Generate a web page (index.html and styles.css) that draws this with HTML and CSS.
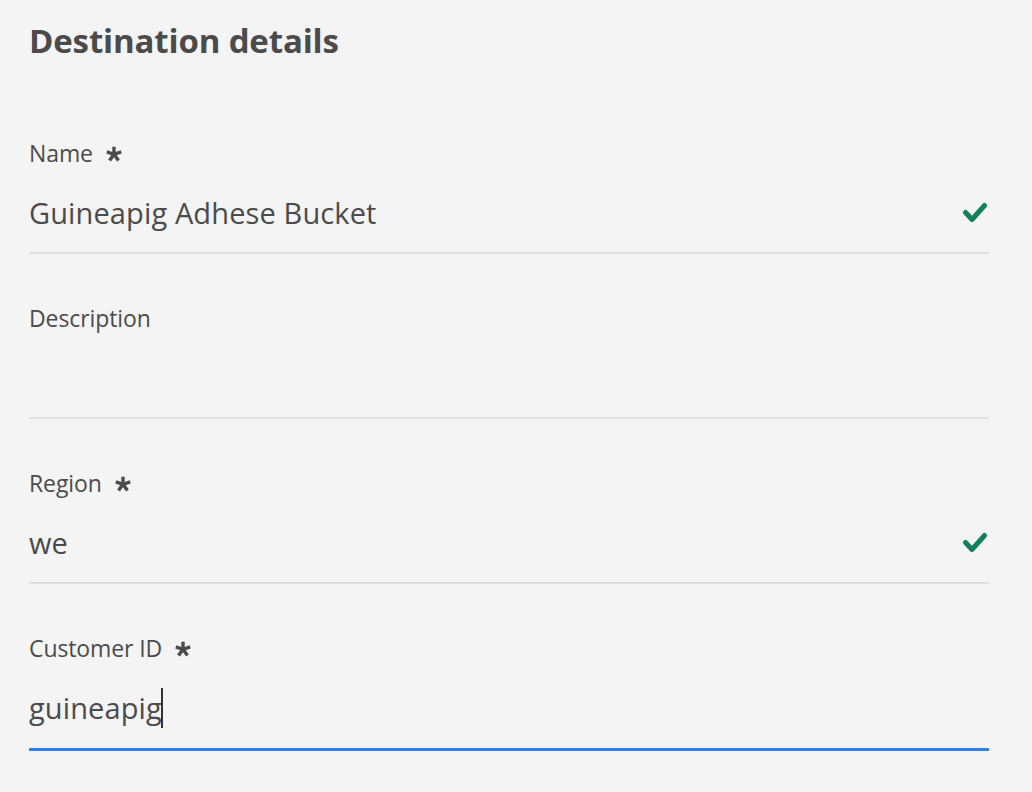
FILE: index.html
```html
<!DOCTYPE html>
<html lang="en">
<head>
<meta charset="utf-8">
<title>Destination details</title>
<link rel="stylesheet" href="styles.css">
</head>
<body>
<main class="panel">
  <h1 class="title">Destination details</h1>

  <div class="field">
    <div class="label">Name<svg class="req" viewBox="-10 -10.4 20 19" aria-hidden="true"><path d="M0 0V-8.5M0 0L8.08 -2.63M0 0L5 6.88M0 0L-5 6.88M0 0L-8.08 -2.63"/></svg></div>
    <div class="input">
      <span class="value">Guineapig Adhese Bucket</span>
      <svg class="check" viewBox="0 0 26 22" aria-hidden="true"><polyline points="3.5,10.5 10,17.5 22.5,3.5"/></svg>
    </div>
  </div>

  <div class="field">
    <div class="label">Description</div>
    <div class="input">
      <span class="value"></span>
    </div>
  </div>

  <div class="field">
    <div class="label">Region<svg class="req" viewBox="-10 -10.4 20 19" aria-hidden="true"><path d="M0 0V-8.5M0 0L8.08 -2.63M0 0L5 6.88M0 0L-5 6.88M0 0L-8.08 -2.63"/></svg></div>
    <div class="input">
      <span class="value">we</span>
      <svg class="check" viewBox="0 0 26 22" aria-hidden="true"><polyline points="3.5,10.5 10,17.5 22.5,3.5"/></svg>
    </div>
  </div>

  <div class="field">
    <div class="label">Customer ID<svg class="req" viewBox="-10 -10.4 20 19" aria-hidden="true"><path d="M0 0V-8.5M0 0L8.08 -2.63M0 0L5 6.88M0 0L-5 6.88M0 0L-8.08 -2.63"/></svg></div>
    <div class="input focused">
      <span class="value">guineapig<span class="caret"></span></span>
    </div>
  </div>
</main>
</body>
</html>
```
FILE: styles.css
```css
html, body {
  margin: 0;
  background: #f4f4f4;
}

body {
  font-family: "Open Sans", "Noto Sans", sans-serif;
  color: #4b4b4b;
}

.panel {
  padding: 21px 43px 0 29px;
}

.title {
  margin: 0 0 77px;
  font-size: 33px;
  line-height: 40px;
  letter-spacing: -0.15px;
  font-weight: 700;
  color: #4b4b4b;
}

.field + .field {
  margin-top: 49px;
}

.label {
  font-size: 23px;
  line-height: 30px;
  height: 30px;
  letter-spacing: -0.1px;
  white-space: nowrap;
}

.req {
  width: 18px;
  height: 17px;
  margin-left: 12px;
  fill: none;
  stroke: #4b4b4b;
  stroke-width: 3.8;
  stroke-linecap: butt;
}

.input {
  display: flex;
  align-items: center;
  justify-content: space-between;
  margin-top: 27px;
  height: 36px;
  padding-bottom: 21px;
  border-bottom: 2px solid #e1e1e1;
}

.input.focused {
  padding-bottom: 22px;
  border-bottom: 3px solid #2f82ec;
}

.value {
  display: flex;
  align-items: center;
  font-size: 29px;
  line-height: 36px;
  height: 36px;
  letter-spacing: 0.12px;
  white-space: pre;
}

.check {
  width: 26px;
  height: 22px;
  margin-right: 1px;
  fill: none;
  stroke: #12805c;
  stroke-width: 5;
  stroke-linecap: round;
  stroke-linejoin: round;
}

.caret {
  display: inline-block;
  width: 2px;
  height: 40px;
  margin-left: -1px;
  background: #333333;
}
```
